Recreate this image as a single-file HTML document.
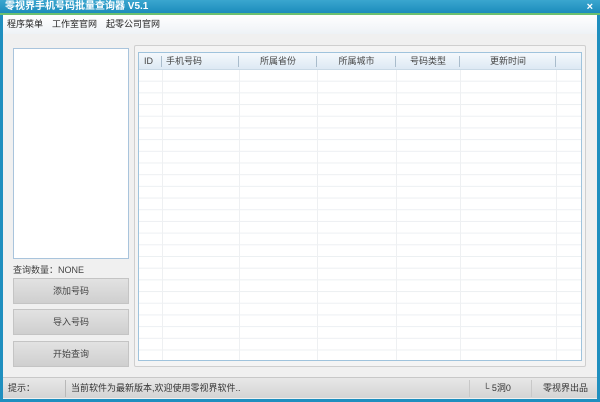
<!DOCTYPE html>
<html><head><meta charset="utf-8"><style>
*{margin:0;padding:0;box-sizing:border-box}
body{width:600px;height:402px;overflow:hidden;background:#1f8fbf;font-family:"Liberation Sans","Noto Sans CJK SC",sans-serif;font-size:9px;color:#444;position:relative}
.a{position:absolute}
.title{left:0;top:0;width:600px;height:15px;background:linear-gradient(#3aa6cf,#1c8cbc);color:#fff;font-weight:bold;font-size:10px;line-height:14px;padding-left:5px;border-bottom:2px solid #6cc070}
.win{left:3px;top:15px;width:594px;height:384px;background:#f0f0f0}
.menu{left:3px;top:15px;width:594px;height:19px;background:linear-gradient(#fff,#eef2f6);line-height:19px;padding-left:4px;font-size:9px;color:#222}
.menu span{margin-right:9px}
.list{left:13px;top:48px;width:116px;height:211px;background:#fff;border:1px solid #a9c4dc}
.btn{left:13px;width:116px;height:26px;background:linear-gradient(#e2e2e2,#cfcfcf);border:1px solid #c4c4c4;text-align:center;line-height:25px;font-size:9px;color:#444}
.panel{left:134px;top:45px;width:452px;height:322px;border:1px solid #cfcfcf;background:#f4f4f4;border-radius:2px}
.grid{left:138px;top:52px;width:444px;height:309px;background:#fff;border:1px solid #9fc3dc;overflow:hidden;
background-image:linear-gradient(#eceff2 1px,transparent 1px);background-size:100% 11.7px;background-position:0 16px}
.hdr{left:0;top:0;width:100%;height:17px;background:linear-gradient(#f4f8fc,#dde9f4);border-bottom:1px solid #c9d9e6;font-size:9px;line-height:17px}
.col{top:0;height:100%;border-left:1px solid #eef0f2}
.hc{top:0;height:17px;text-align:center;color:#444}
.sep{top:3px;width:1px;height:11px;background:#a9bccc}
.status{left:3px;top:377px;width:594px;height:21px;background:linear-gradient(#e8e8e8,#d4d4d4);border-top:1px solid #c8c8c8;line-height:21px;font-size:9px;color:#333}
</style></head><body>
<div class="a title">零视界手机号码批量查询器 V5.1</div>
<div class="a" style="right:7px;top:0;color:#fff;font-size:11px;font-weight:bold;line-height:14px">×</div>
<div class="a win"></div>
<div class="a menu"><span>程序菜单</span><span>工作室官网</span><span>起零公司官网</span></div>
<div class="a list"></div>
<div class="a" style="left:13px;top:263px;font-size:9px;color:#444">查询数量：NONE</div>
<div class="a btn" style="top:278px">添加号码</div>
<div class="a btn" style="top:309px">导入号码</div>
<div class="a btn" style="top:341px">开始查询</div>
<div class="a panel"></div>
<div class="a grid">
<div class="a col" style="left:23px"></div><div class="a col" style="left:100px"></div><div class="a col" style="left:178px"></div><div class="a col" style="left:257px"></div><div class="a col" style="left:321px"></div><div class="a col" style="left:417px"></div>
<div class="a hdr">
<div class="a hc" style="left:5px">ID</div>
<div class="a hc" style="left:27px">手机号码</div>
<div class="a hc" style="left:100px;width:78px">所属省份</div>
<div class="a hc" style="left:178px;width:79px">所属城市</div>
<div class="a hc" style="left:257px;width:64px">号码类型</div>
<div class="a hc" style="left:321px;width:96px">更新时间</div>
<div class="a sep" style="left:22px"></div><div class="a sep" style="left:99px"></div><div class="a sep" style="left:177px"></div><div class="a sep" style="left:256px"></div><div class="a sep" style="left:320px"></div><div class="a sep" style="left:416px"></div>
</div></div>
<div class="a status">
<div class="a" style="left:5px;top:0">提示：</div>
<div class="a" style="left:62px;top:2px;width:1px;height:17px;background:#b8b8b8"></div>
<div class="a" style="left:68px;top:0">当前软件为最新版本,欢迎使用零视界软件..</div>
<div class="a" style="left:466px;top:2px;width:1px;height:17px;background:#c8c8c8"></div>
<div class="a" style="left:480px;top:0">└ 5洞0</div>
<div class="a" style="left:528px;top:2px;width:1px;height:17px;background:#c8c8c8"></div>
<div class="a" style="left:540px;top:0">零视界出品</div>
</div>
</body></html>
